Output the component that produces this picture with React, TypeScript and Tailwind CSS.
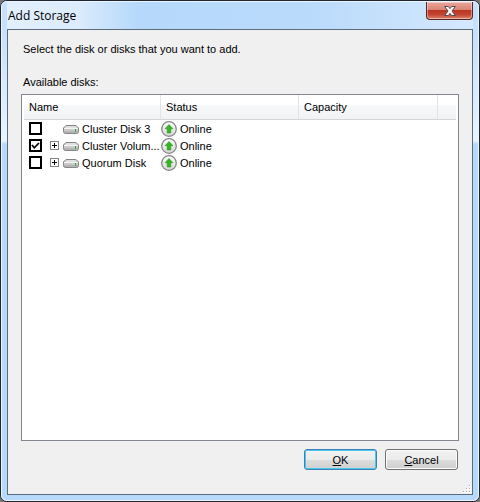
import React, { useState } from 'react';

interface Disk {
  id: string;
  name: string;
  label: string;
  status: string;
  expandable: boolean;
}

const disks: Disk[] = [
  { id: 'disk-3', name: 'Cluster Disk 3', label: 'Cluster Disk 3', status: 'Online', expandable: false },
  { id: 'volume', name: 'Cluster Volume', label: 'Cluster Volum...', status: 'Online', expandable: true },
  { id: 'quorum', name: 'Quorum Disk', label: 'Quorum Disk', status: 'Online', expandable: true },
];

const DiskIcon = () => (
  <svg className="h-4 w-4 shrink-0" viewBox="0 0 16 16" aria-hidden="true">
    <path d="M3 4.500h10L15.500 7v3.500q0 2-2 2h-11q-2 0-2-2V7z" fill="#b4b4b4" stroke="#858585" strokeWidth="1" />
    <path d="M3.500 5h9l2 2h-13z" fill="#e0e0e0" />
    <path d="M1 7.500h14" stroke="#f4f4f4" strokeWidth="1" />
    <path d="M1 8h14v2H1z" fill="#cacaca" />
    <path d="M12 8h1v3h-1z" fill="#2fae35" />
  </svg>
);

const OnlineIcon = () => (
  <svg className="h-4 w-4 shrink-0" viewBox="0 0 16 16" aria-hidden="true">
    <defs>
      <linearGradient id="badge" x1="0" y1="0" x2="0" y2="1">
        <stop offset="0" stopColor="#ffffff" />
        <stop offset="1" stopColor="#d6d6d6" />
      </linearGradient>
    </defs>
    <circle cx="8" cy="8" r="7.300" fill="url(#badge)" stroke="#858585" strokeWidth="1.300" />
    <path d="M8 3.500l4 4.200H9.800V12H6.200V7.700H4z" fill="#35b421" stroke="#2b9d20" strokeWidth="0.6" />
  </svg>
);

const CloseIcon = () => (
  <svg className="h-3 w-3" viewBox="0 0 12 12" aria-hidden="true">
    <path
      d="M.7 1.500h3.600L6 3.600l1.700-2.100h3.600L8 6l3.300 4.500H7.700L6 8.400l-1.700 2.100H.7L4 6z"
      fill="#f4f4f4"
      stroke="#534c55"
      strokeWidth="1"
      strokeLinejoin="round"
    />
  </svg>
);

const SizeGrip = () => (
  <svg className="absolute right-0 bottom-0 h-2.5 w-2.5" viewBox="0 0 10 10" aria-hidden="true">
    <path d="M7 1h2v2H7zM4 4h2v2H4zM7 4h2v2H7zM1 7h2v2H1zM4 7h2v2H4zM7 7h2v2H7z" fill="#ffffff" />
    <path d="M7 1h1v1H7zM4 4h1v1H4zM7 4h1v1H7zM1 7h1v1H1zM4 7h1v1H4zM7 7h1v1H7z" fill="#a2a2a2" />
  </svg>
);

interface DiskRowProps {
  disk: Disk;
  checked: boolean;
  onToggle: () => void;
}

const DiskRow: React.FC<DiskRowProps> = ({ disk, checked, onToggle }) => (
  <tr className="h-[17px]">
    <td className="p-0">
      <div className="flex h-[17px] items-center pl-[5px]">
        <span className="relative h-[13px] w-[13px] shrink-0">
          <input
            id={disk.id}
            type="checkbox"
            checked={checked}
            onChange={onToggle}
            aria-label={disk.name}
            className="block h-[13px] w-[13px] appearance-none border-2 border-black bg-white"
          />
          {checked && (
            <svg className="pointer-events-none absolute inset-0 h-[13px] w-[13px]" viewBox="0 0 13 13" aria-hidden="true">
              <path d="M3 6l2.300 2.800L10 4" fill="none" stroke="#000000" strokeWidth="1.700" />
            </svg>
          )}
        </span>
        <span className="flex w-[17px] shrink-0 justify-end">
          {disk.expandable && (
            <button aria-label={`Expand ${disk.name}`} className="h-[9px] w-[9px] border border-[#848484] bg-white">
              <svg className="block h-[7px] w-[7px]" viewBox="0 0 7 7" aria-hidden="true">
                <path d="M1 3h5v1H1zM3 1h1v5H3z" fill="#000000" />
              </svg>
            </button>
          )}
        </span>
        <label htmlFor={disk.id} className="flex items-center gap-[3px] pl-1 whitespace-nowrap">
          <DiskIcon />
          {disk.label}
        </label>
      </div>
    </td>
    <td className="p-0">
      <div className="flex h-[17px] items-center gap-[3px] whitespace-nowrap">
        <OnlineIcon />
        {disk.status}
      </div>
    </td>
    <td className="p-0" />
    <td className="p-0" />
  </tr>
);

const headCell = 'border-r border-b border-r-[#e2e3e5] border-b-[#d5d5d5] p-0 pl-[5px] text-left font-normal';

const App: React.FC = () => {
  const [selected, setSelected] = useState<string[]>(['volume']);

  const toggle = (id: string) =>
    setSelected((prev) => (prev.includes(id) ? prev.filter((x) => x !== id) : [...prev, id]));

  return (
    <div className="flex min-h-screen flex-col bg-[#77777a] font-['Liberation_Sans',Arial,sans-serif] text-[11px] leading-4 text-black">
      <div className="flex flex-1 flex-col rounded-[7px] border border-[#20252f] bg-[#b9d9fc] bg-[linear-gradient(180deg,#c7e0fb_0px,#c7e0fb_30px,#e8f3ff_140px,#b7d9fb_143px)] bg-no-repeat">
        <div className="flex flex-1 flex-col rounded-[6px] border border-[#e9f5ff] px-[5px] pb-[5px]">
          {/* Title bar */}
          <header className="flex h-[27px] shrink-0 items-start justify-between bg-[linear-gradient(90deg,#e2effc_0px,#dcecfc_70px,#b6d9fb_130px,#b9dafb_300px,#d5e8fd_100%)]">
            <h1 className="pt-[5px] pl-px font-['Open_Sans','Noto_Sans',sans-serif] text-[12px] leading-[18px]">Add Storage</h1>
            <button
              aria-label="Close"
              className="flex h-[18px] w-[47px] items-center justify-center rounded-b-[4px] border border-t-0 border-[#59252b] bg-[linear-gradient(180deg,#e9a79c_0%,#d98576_45%,#bd3522_50%,#c24532_75%,#dc8870_100%)] shadow-[inset_0_0_0_1px_#ffffff66]"
            >
              <CloseIcon />
            </button>
          </header>

          {/* Client area */}
          <main className="relative flex flex-1 flex-col border border-[#5b6b7b] bg-[#f0f0f0] px-[13px] pt-[11px] pb-6">
            <p className="pl-0.5">Select the disk or disks that you want to add.</p>
            <h2 id="disks-label" className="mt-[17px] pl-0.5">Available disks:</h2>

            <div className="mt-1 flex-1 border border-[#828790] bg-white px-0.5">
              <table aria-labelledby="disks-label" className="w-full table-fixed border-separate border-spacing-0">
                <colgroup>
                  <col className="w-[137px]" />
                  <col className="w-[138px]" />
                  <col className="w-[139px]" />
                  <col />
                </colgroup>
                <thead>
                  <tr className="h-[25px] bg-[linear-gradient(180deg,#ffffff_0%,#ffffff_40%,#f7f8fa_41%,#f1f2f4_100%)]">
                    <th className={headCell}>Name</th>
                    <th className={headCell}>Status</th>
                    <th className={headCell}>Capacity</th>
                    <th className="border-b border-[#d5d5d5] p-0" />
                  </tr>
                </thead>
                <tbody>
                  {disks.map((disk) => (
                    <DiskRow
                      key={disk.id}
                      disk={disk}
                      checked={selected.includes(disk.id)}
                      onToggle={() => toggle(disk.id)}
                    />
                  ))}
                </tbody>
              </table>
            </div>

            <div className="mt-2 flex justify-end gap-2 pr-px">
              <button className="h-[21px] w-[73px] rounded-[3px] border border-[#3c7fb1] bg-[linear-gradient(180deg,#f2f2f2_0%,#ebebeb_50%,#dddddd_51%,#cfcfcf_100%)] shadow-[inset_0_0_0_1px_#48c8f4]">
                <span className="underline">O</span>K
              </button>
              <button className="h-[21px] w-[73px] rounded-[3px] border border-[#707070] bg-[linear-gradient(180deg,#f2f2f2_0%,#ebebeb_50%,#dddddd_51%,#cfcfcf_100%)] shadow-[inset_0_0_0_1px_#fcfcfc]">
                <span className="underline">C</span>ancel
              </button>
            </div>
            <SizeGrip />
          </main>
        </div>
      </div>
    </div>
  );
};

export default App;
